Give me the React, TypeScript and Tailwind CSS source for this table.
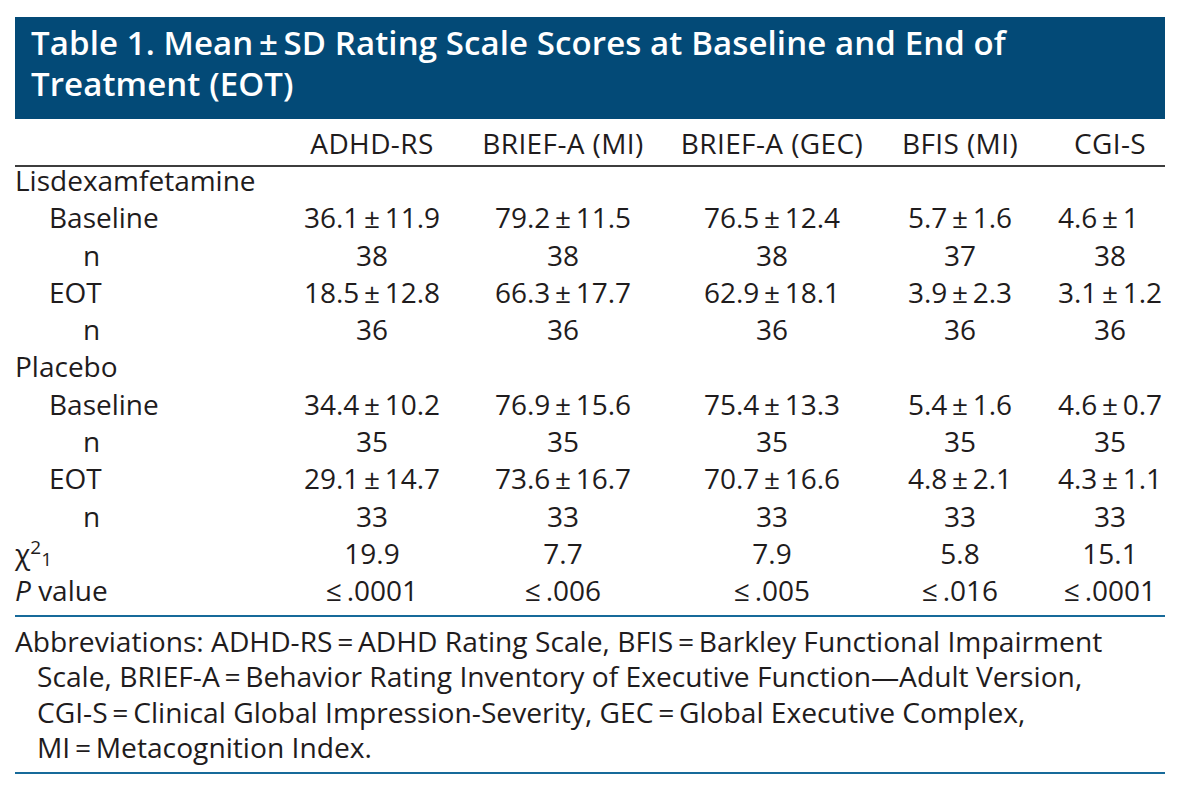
const T = "\u2009";

type Row = { label: React.ReactNode; indent: 0 | 1 | 2; cells?: string[] };

const pm = (a: string, b: string) => `${a}${T}±${T}${b}`;
const le = (v: string) => `≤${T}${v}`;

const rows: Row[] = [
  { label: "Lisdexamfetamine", indent: 0 },
  { label: "Baseline", indent: 1, cells: [pm("36.1", "11.9"), pm("79.2", "11.5"), pm("76.5", "12.4"), pm("5.7", "1.6"), pm("4.6", "1")] },
  { label: "n", indent: 2, cells: ["38", "38", "38", "37", "38"] },
  { label: "EOT", indent: 1, cells: [pm("18.5", "12.8"), pm("66.3", "17.7"), pm("62.9", "18.1"), pm("3.9", "2.3"), pm("3.1", "1.2")] },
  { label: "n", indent: 2, cells: ["36", "36", "36", "36", "36"] },
  { label: "Placebo", indent: 0 },
  { label: "Baseline", indent: 1, cells: [pm("34.4", "10.2"), pm("76.9", "15.6"), pm("75.4", "13.3"), pm("5.4", "1.6"), pm("4.6", "0.7")] },
  { label: "n", indent: 2, cells: ["35", "35", "35", "35", "35"] },
  { label: "EOT", indent: 1, cells: [pm("29.1", "14.7"), pm("73.6", "16.7"), pm("70.7", "16.6"), pm("4.8", "2.1"), pm("4.3", "1.1")] },
  { label: "n", indent: 2, cells: ["33", "33", "33", "33", "33"] },
  {
    label: (
      <>
        χ<sup className="text-[19px]">2</sup>
        <sub className="text-[19px] bottom-[-2px]">1</sub>
      </>
    ),
    indent: 0,
    cells: ["19.9", "7.7", "7.9", "5.8", "15.1"],
  },
  {
    label: (
      <>
        <span className="italic">P</span> value
      </>
    ),
    indent: 0,
    cells: [le(".0001"), le(".006"), le(".005"), le(".016"), le(".0001")],
  },
];

const headers = ["ADHD-RS", "BRIEF-A (MI)", "BRIEF-A (GEC)", "BFIS (MI)", "CGI-S"];

const grid = "grid grid-cols-[268px_178px_204px_214px_162px_124px]";
const indents = ["pl-0", "pl-[34px]", "pl-[68px]"];

function Cell({ value, col }: { value: string; col: number }) {
  if (col === 4 && value.includes("±")) {
    // CGI-S values line up on their left edge
    const short = !value.includes(".", value.indexOf("±"));
    return (
      <div className="pl-[14px] text-center">
        <span className="inline-block w-[104px] text-left whitespace-nowrap">
          {value}
          {short && <span className="invisible">.0</span>}
        </span>
      </div>
    );
  }
  return <div className={`${col === 4 ? "pl-[14px]" : ""} text-center whitespace-nowrap`}>{value}</div>;
}

export default function App() {
  return (
    <div className="w-[1191px] h-[796px] bg-white text-[#1f1c1d] font-['Open_Sans',sans-serif] overflow-hidden">
      <div className="ml-[15px] w-[1150px] pt-[17px]">
        <div className="h-[102px] bg-[#034a77] pl-[16px] pt-[5px] text-white font-semibold text-[33px] leading-[41px] tracking-[0.1px]">
          Table 1. Mean{T}±{T}SD Rating Scale Scores at Baseline and End of
          <br />
          Treatment (EOT)
        </div>

        <div className="text-[28px] leading-[26px]">
          <div className={`${grid} mt-[10.5px] h-[35.5px]`}>
            <div />
            {headers.map((h, i) => (
              <div key={h} className={`${i === 4 ? "pl-[14px]" : ""} text-center whitespace-nowrap tracking-[0.4px]`}>
                {h}
              </div>
            ))}
          </div>
          <div className="h-[2px] bg-[#3d3d3d]" />

          {rows.map((r, i) => (
            <div key={i} className={`${grid} h-[37.3px]`}>
              <div className={`${indents[r.indent]} whitespace-nowrap`}>{r.label}</div>
              {r.cells?.map((c, j) => <Cell key={j} value={c} col={j} />)}
            </div>
          ))}
          <div className="h-[2px] bg-[#176a9a]" />

          <div className="pt-[7px] leading-[35.5px] text-[28.2px]">
            <div className="whitespace-nowrap">
              Abbreviations: ADHD-RS{T}={T}ADHD Rating Scale, BFIS{T}={T}Barkley Functional Impairment
            </div>
            <div className="pl-[22px] whitespace-nowrap">
              Scale, BRIEF-A{T}={T}Behavior Rating Inventory of Executive Function—Adult Version,
            </div>
            <div className="pl-[22px] whitespace-nowrap">
              CGI-S{T}={T}Clinical Global Impression-Severity, GEC{T}={T}Global Executive Complex,
            </div>
            <div className="pl-[22px] whitespace-nowrap">MI{T}={T}Metacognition Index.</div>
          </div>
          <div className="mt-[6px] h-[2px] bg-[#176a9a]" />
        </div>
      </div>
    </div>
  );
}
